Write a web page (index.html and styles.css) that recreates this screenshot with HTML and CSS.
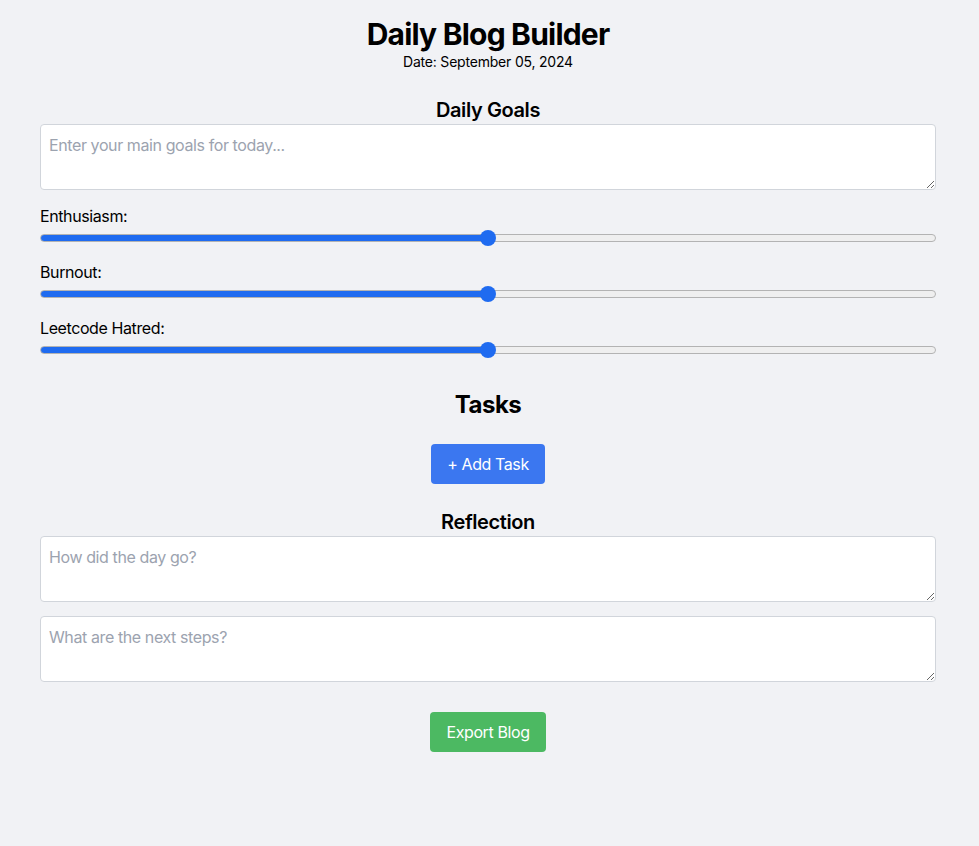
FILE: index.html
```html
<!DOCTYPE html>
<html lang="en">
<head>
<meta charset="utf-8">
<title>Daily Blog Builder</title>
<link rel="stylesheet" href="styles.css">
</head>
<body>
<main class="container">
  <header class="header">
    <h1 class="title">Daily Blog Builder</h1>
    <p class="date">Date: September 05, 2024</p>
  </header>

  <section class="section goals">
    <h2 class="subheading">Daily Goals</h2>
    <textarea class="field" rows="2" placeholder="Enter your main goals for today..."></textarea>

    <div class="sliders">
      <div class="slider-group">
        <label class="slider-label" for="enth">Enthusiasm:</label>
        <input class="range" id="enth" type="range" min="0" max="10" value="5">
      </div>
      <div class="slider-group">
        <label class="slider-label" for="burn">Burnout:</label>
        <input class="range" id="burn" type="range" min="0" max="10" value="5">
      </div>
      <div class="slider-group">
        <label class="slider-label" for="leet">Leetcode Hatred:</label>
        <input class="range" id="leet" type="range" min="0" max="10" value="5">
      </div>
    </div>
  </section>

  <section class="section tasks">
    <h2 class="heading">Tasks</h2>
    <button class="btn btn-blue" type="button">+ Add Task</button>
  </section>

  <section class="section reflection">
    <h2 class="subheading">Reflection</h2>
    <div class="fields">
      <textarea class="field" rows="2" placeholder="How did the day go?"></textarea>
      <textarea class="field" rows="2" placeholder="What are the next steps?"></textarea>
    </div>
  </section>

  <div class="actions">
    <button class="btn btn-green" type="button">Export Blog</button>
  </div>
</main>
</body>
</html>
```

FILE: styles.css
```css
* { box-sizing: border-box; }

html, body {
  margin: 0;
  padding: 0;
}

body {
  background: #f1f2f5;
  font-family: Inter, "Liberation Sans", Arial, sans-serif;
  color: #000;
  min-height: 846px;
  letter-spacing: -0.4px;
}

.container {
  width: 896px;
  margin: 0 43px 0 40px;
  padding-top: 16px;
  display: flex;
  flex-direction: column;
}

.header {
  text-align: center;
}

.title {
  margin: 0;
  font-size: 30px;
  line-height: 36px;
  font-weight: 700;
  letter-spacing: -0.8px;
}

.date {
  margin: 0;
  font-size: 14px;
  line-height: 20px;
  letter-spacing: -0.2px;
}

.section {
  display: flex;
  flex-direction: column;
}

.goals { margin-top: 24px; }

.subheading {
  margin: 0;
  text-align: center;
  font-size: 20px;
  line-height: 28px;
  font-weight: 600;
  letter-spacing: -0.4px;
}

.heading {
  margin: 0;
  text-align: center;
  font-size: 24px;
  line-height: 32px;
  font-weight: 700;
  letter-spacing: -0.5px;
}

.field {
  display: block;
  width: 100%;
  height: 66px;
  padding: 8px;
  border: 1px solid #d1d5db;
  border-radius: 4px;
  background: #fff;
  font-family: inherit;
  font-size: 16px;
  line-height: 24px;
  letter-spacing: -0.4px;
  color: #111;
  resize: vertical;
  margin: 0;
}

.field::placeholder {
  color: #9ca3af;
}

.sliders {
  margin-top: 14px;
  display: flex;
  flex-direction: column;
  gap: 14px;
}

.slider-group {
  display: flex;
  flex-direction: column;
  gap: 2px;
}

.slider-label {
  font-size: 16px;
  line-height: 24px;
}

.range {
  -webkit-appearance: none;
  appearance: none;
  display: block;
  width: 100%;
  height: 16px;
  margin: 0;
  background: transparent;
}

.range::-webkit-slider-runnable-track {
  height: 8px;
  border: 1px solid #b3b3b3;
  border-radius: 4px;
  background: linear-gradient(to right, #1f6bf0 0, #1f6bf0 50%, #efefef 50%, #efefef 100%);
}

.range::-webkit-slider-thumb {
  -webkit-appearance: none;
  appearance: none;
  width: 16px;
  height: 16px;
  border-radius: 50%;
  background: #1f6bf0;
  border: none;
  margin-top: -5px;
}

.tasks {
  margin-top: 31px;
  align-items: center;
  gap: 23px;
}

.btn {
  border: none;
  border-radius: 4px;
  padding: 8px 16px;
  font-family: inherit;
  font-size: 16px;
  line-height: 24px;
  letter-spacing: -0.4px;
  color: #fff;
  cursor: pointer;
}

.btn-blue { background: #3b77f0; }

.btn-green { background: #4cb962; }

.reflection { margin-top: 24px; }

.fields {
  display: flex;
  flex-direction: column;
  gap: 14px;
}

.actions {
  margin-top: 30px;
  display: flex;
  justify-content: center;
}
```
